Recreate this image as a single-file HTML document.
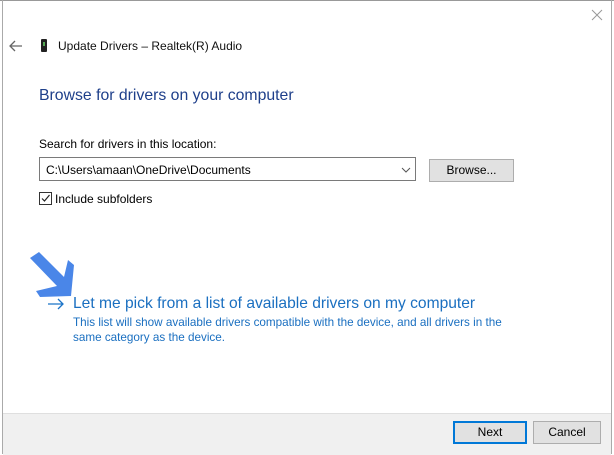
<!DOCTYPE html>
<html><head><style>
body{margin:0;width:614px;height:454px;background:#fff;position:relative;overflow:hidden;font-family:"Liberation Sans",sans-serif;font-size:12px;color:#000}
.a{position:absolute}
</style></head><body>
<div class="a" style="left:0;top:0;width:614px;height:1px;background:#999"></div>
<div class="a" style="left:2px;top:0;width:1px;height:454px;background:#aaa"></div>
<div class="a" style="left:611px;top:0;width:1px;height:454px;background:#aaa"></div>
<svg class="a" style="left:591px;top:9px" width="12" height="12"><path d="M1 1L11 11M11 1L1 11" stroke="#999" stroke-width="1"/></svg>
<svg class="a" style="left:9px;top:40px" width="14" height="12"><path d="M1 6H13M6 1L1 6L6 11" stroke="#666" stroke-width="1.3" fill="none"/></svg>
<div class="a" style="left:41px;top:39px;width:6px;height:13px;background:#222;border-radius:1px"></div>
<div class="a" style="left:43px;top:42px;width:2px;height:4px;background:#5a5"></div>
<div class="a" style="left:58px;top:39px;font-size:12px;color:#111">Update Drivers – Realtek(R) Audio</div>
<div class="a" style="left:39px;top:87px;font-size:15.8px;color:#1e3f8a">Browse for drivers on your computer</div>
<div class="a" style="left:39px;top:137px">Search for drivers in this location:</div>
<div class="a" style="left:39px;top:157px;width:377px;height:24px;border:1px solid #7a7a7a;box-sizing:border-box"></div>
<div class="a" style="left:46px;top:163px">C:\Users\amaan\OneDrive\Documents</div>
<svg class="a" style="left:401px;top:167px" width="10" height="6"><path d="M1 1L5 5L9 1" stroke="#555" fill="none"/></svg>
<div class="a" style="left:429px;top:159px;width:85px;height:23px;border:1px solid #adadad;background:#e1e1e1;box-sizing:border-box;text-align:center;line-height:21px">Browse...</div>
<div class="a" style="left:39px;top:192px;width:13px;height:13px;border:1px solid #333;box-sizing:border-box"></div>
<svg class="a" style="left:40px;top:193px" width="11" height="11"><path d="M2 5.5L4.5 8L9.5 2" stroke="#222" stroke-width="1.2" fill="none"/></svg>
<div class="a" style="left:55px;top:192px">Include subfolders</div>
<svg class="a" style="left:24px;top:250px" width="52" height="48"><path d="M6 8L15 2L40 27L44 10L50 15L47 46L16 47L12 41L33 36Z" fill="#4a86e8"/></svg>
<svg class="a" style="left:47px;top:298px" width="18" height="12"><path d="M1 6H16M11 1L16 6L11 11" stroke="#1a73c8" stroke-width="1.3" fill="none"/></svg>
<div class="a" style="left:73px;top:295px;font-size:15.6px;color:#1a6fc0">Let me pick from a list of available drivers on my computer</div>
<div class="a" style="left:73px;top:315px;font-size:11.7px;color:#1a6fc0;line-height:15px;width:445px">This list will show available drivers compatible with the device, and all drivers in the same category as the device.</div>
<div class="a" style="left:3px;top:413px;width:608px;height:41px;background:#f0f0f0;border-top:1px solid #dfdfdf"></div>
<div class="a" style="left:453px;top:421px;width:74px;height:23px;border:2px solid #0078d7;background:#e1e1e1;box-sizing:border-box;text-align:center;line-height:19px">Next</div>
<div class="a" style="left:533px;top:421px;width:68px;height:23px;border:1px solid #adadad;background:#e1e1e1;box-sizing:border-box;text-align:center;line-height:21px">Cancel</div>
</body></html>
